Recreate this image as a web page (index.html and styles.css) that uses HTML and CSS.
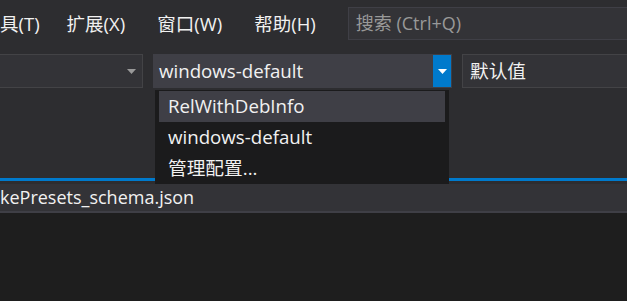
FILE: index.html
```html
<!DOCTYPE html>
<html lang="zh-CN">
<head>
<meta charset="utf-8">
<title>Visual Studio</title>
<link rel="stylesheet" href="styles.css">
</head>
<body>
<div class="window">
  <header class="menubar">
    <nav class="menus">
      <span class="menu menu-first">具(T)</span>
      <span class="menu">扩展(X)</span>
      <span class="menu">窗口(W)</span>
      <span class="menu">帮助(H)</span>
    </nav>
    <div class="search">搜索 (Ctrl+Q)</div>
  </header>

  <div class="toolbar">
    <div class="combo combo-target">
      <span class="combo-fill"></span>
      <svg class="combo-arrow" width="9" height="5" viewBox="0 0 9 5"><path d="M0 0H9L4.5 5Z" fill="#999999"/></svg>
    </div>
    <div class="combo combo-open">
      <span class="combo-text">windows-default</span>
      <span class="combo-btn">
        <svg width="9" height="5" viewBox="0 0 9 5"><path d="M0 0H9L4.5 5Z" fill="#ffffff"/></svg>
      </span>
      <ul class="dropdown">
        <li class="dropdown-item is-active">RelWithDebInfo</li>
        <li class="dropdown-item">windows-default</li>
        <li class="dropdown-item">管理配置...</li>
      </ul>
    </div>
    <div class="combo combo-value">
      <span class="combo-text">默认值</span>
    </div>
  </div>

  <div class="well"></div>
  <div class="accent"></div>
  <div class="tabbar">
    <span class="tab-title">kePresets_schema.json</span>
  </div>
  <div class="editor"></div>
</div>
</body>
</html>
```

FILE: styles.css
```css
* {
  box-sizing: border-box;
}

html, body {
  margin: 0;
  padding: 0;
  background: #2d2d30;
  overflow: hidden;
}

body {
  width: 627px;
  height: 301px;
  font-family: "Open Sans", "Noto Sans CJK SC", sans-serif;
  font-size: 18px;
  color: #f1f1f1;
}

.window {
  display: flex;
  flex-direction: column;
  height: 301px;
  overflow: hidden;
}

/* menu bar */
.menubar {
  display: flex;
  align-items: flex-start;
  height: 47px;
  padding-top: 7px;
  background: #2d2d30;
  white-space: nowrap;
}

.menus {
  display: flex;
  flex-shrink: 0;
}

.menu {
  height: 33px;
  line-height: 33px;
  padding: 0 16px;
  color: #f1f1f1;
  font-size: 18.5px;
}

.menu-first {
  margin-left: -16px;
  padding-right: 11px;
}

.search {
  flex-shrink: 0;
  width: 320px;
  height: 33px;
  margin-left: 16px;
  padding-left: 7px;
  line-height: 31px;
  border: 1px solid #3f3f46;
  background: #333337;
  color: #999999;
}

/* toolbar */
.toolbar {
  display: flex;
  gap: 10px;
  height: 43px;
  padding-top: 7px;
  white-space: nowrap;
}

.combo {
  position: relative;
  display: flex;
  align-items: center;
  flex-shrink: 0;
  height: 34px;
  border: 1px solid #434346;
  background: #333337;
  font-size: 18.7px;
}

.combo-target {
  width: 153px;
  margin-left: -10px;
  padding-right: 6px;
}

.combo-fill {
  flex: 1;
}

.combo-arrow {
  display: block;
}

.combo-open {
  width: 299px;
  border-color: #3f3f46;
  background: #3f3f46;
}

.combo-text {
  flex: 1;
  padding-left: 5px;
  line-height: 32px;
}

.combo-btn {
  display: flex;
  align-items: center;
  justify-content: center;
  width: 18px;
  height: 32px;
  background: #007acc;
}

.combo-value {
  width: 200px;
}

.combo-value .combo-text {
  padding-left: 7px;
}

/* dropdown popup (overlays the content below) */
.dropdown {
  position: absolute;
  top: 35px;
  left: 1px;
  z-index: 5;
  width: 294px;
  margin: 0;
  padding: 1px 4px 0;
  list-style: none;
  background: #1b1b1c;
}

.dropdown-item {
  height: 31px;
  line-height: 30px;
  padding-left: 9px;
  color: #f1f1f1;
}

.dropdown-item.is-active {
  background: #3f3f46;
}

/* content */
.well {
  height: 88px;
  background: #2d2d30;
}

.accent {
  height: 3px;
  background: #007acc;
  margin-bottom: 3px;
}

.tabbar {
  height: 27px;
  line-height: 27px;
  background: #333337;
  border-bottom: 2px solid #3f3f46;
  box-sizing: content-box;
  white-space: nowrap;
  overflow: hidden;
}

.tab-title {
  color: #f1f1f1;
}

.editor {
  flex: 1;
  background: #1e1e1e;
}
```
